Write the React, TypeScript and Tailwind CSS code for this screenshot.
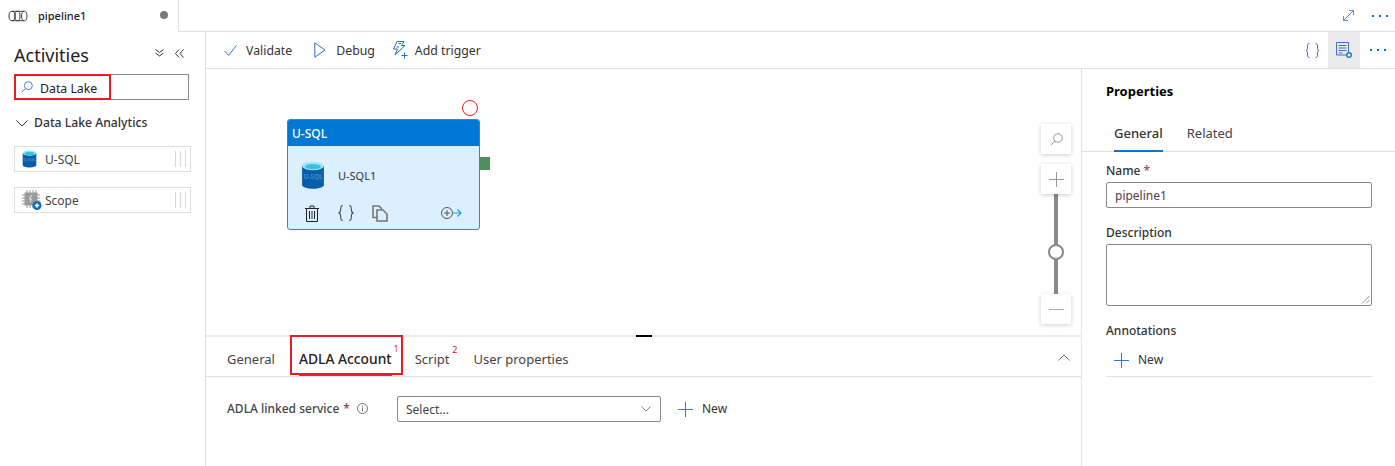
import type { ReactNode } from "react";

function PipelineIcon() {
  return (
    <svg width="20" height="12" viewBox="0 0 20 14" preserveAspectRatio="none" fill="none" stroke="#333" strokeWidth="1">
      <ellipse cx="4" cy="7" rx="3" ry="5.500" />
      <ellipse cx="9.500" cy="7" rx="2.500" ry="5.500" />
      <path d="M4 1.500h12.500c1.500 0 2.500 2.500 2.500 5.500s-1 5.500-2.500 5.500H4" />
      <path d="M16 1.500c-1.500 0-2.500 2.500-2.500 5.500s1 5.500 2.500 5.500" />
    </svg>
  );
}

function DbIcon({ size }: { size: number }) {
  return (
    <svg width={size} height={size * 1.2} viewBox="0 0 24 29">
      <path d="M1 5v19c0 2.500 5 4 11 4s11-1.500 11-4V5z" fill="#0a5ea8" />
      <ellipse cx="12" cy="5" rx="11" ry="4.200" fill="#a5e4f5" />
      <ellipse cx="12" cy="5.600" rx="8" ry="2.600" fill="#36c0e4" />
      <text x="12" y="18.500" textAnchor="middle" fontSize="6.500" fontWeight="700" fill="#3a8cc4" fontFamily="Noto Sans, sans-serif">U-SQL</text>
    </svg>
  );
}

function ScopeIcon() {
  return (
    <svg width="20" height="20" viewBox="0 0 20 20">
      <path d="M0 5h18M0 8h18M0 11h18M0 14h18M5 0v18M8 0v18M11 0v18M14 0v18" stroke="#9a9a9a" strokeWidth="1" />
      <rect x="2.500" y="2.500" width="13" height="13" fill="#9b9b9b" />
      <path d="M9.500 5l-2 4h2l-1 3" stroke="#e8e8e8" strokeWidth="1" fill="none" />
      <circle cx="15" cy="15.500" r="4.500" fill="#0f6cbd" />
      <path d="M12.800 15.500h4.400M15 13.300v4.400" stroke="#fff" strokeWidth="1.400" />
    </svg>
  );
}

function TriggerIcon() {
  return (
    <svg width="16" height="18" viewBox="0 0 16 18" fill="none" stroke="#1f6fc9" strokeWidth="1">
      <path d="M5 .5h7l-2.500 4H13L3 14l2.500-6H1.500z" />
      <path d="M4.500 6h2.500M6.500 2.500h2.500" />
      <path d="M9.500 14.500h6M12.500 11.500v6" />
    </svg>
  );
}

function PropertiesIcon() {
  return (
    <svg width="17" height="17" viewBox="0 0 17 17" fill="none">
      <path d="M.5.500h12v12.500H.5z" stroke="#3f6fd1" />
      <path d="M2.500 3.500h8M2.500 6h8M2.500 8.500h8M2.500 11h4" stroke="#3f6fd1" />
      <circle cx="13" cy="13" r="2.300" stroke="#1c7fb6" strokeWidth="1.500" fill="#ebebeb" />
    </svg>
  );
}

function Glass({ size, color }: { size: number; color: string }) {
  return (
    <svg width={size} height={size} viewBox="0 0 13 13" fill="none" stroke={color} strokeWidth="1">
      <circle cx="8" cy="5" r="4.300" />
      <path d="M5 8L.8 12.200" />
    </svg>
  );
}

function Cross({ size, color }: { size: number; color: string }) {
  return (
    <svg width={size} height={size} viewBox="0 0 15 15" stroke={color} strokeWidth="1" fill="none">
      <path d="M0 7.500h15M7.500 0v15" />
    </svg>
  );
}

function Chevron({ up, width, color }: { up?: boolean; width: number; color: string }) {
  return (
    <svg width={width} height={width / 2 + 1} viewBox="0 0 12 7" fill="none" stroke={color} strokeWidth="1">
      <path d={up ? "M.5 6.500L6 1l5.500 5.500" : "M.5.500L6 6 11.500.500"} />
    </svg>
  );
}

function Braces({ color, height }: { color: string; height: number }) {
  return (
    <svg width={height} height={height} viewBox="0 0 15 15" fill="none" stroke={color} strokeWidth="1">
      <path d="M4.500.5C2.500.5 2.500 2 2.500 4S2.500 7 1 7.500c1.500.5 1.500 1.500 1.500 3.500s0 3.500 2 3.500" />
      <path d="M10.500.5c2 0 2 1.500 2 3.500s0 3 1.500 3.500c-1.500.5-1.500 1.500-1.500 3.500s0 3.500-2 3.500" />
    </svg>
  );
}

function Dots({ className }: { className?: string }) {
  return (
    <span className={`flex gap-[5px] ${className ?? ""}`}>
      <span className="h-[2px] w-[2px] bg-[#0078d4]" />
      <span className="h-[2px] w-[2px] bg-[#0078d4]" />
      <span className="h-[2px] w-[2px] bg-[#0078d4]" />
    </span>
  );
}

function GripLines() {
  return (
    <div className="flex gap-[4px] pr-[4px]">
      <span className="h-[16px] w-px bg-[#d8d8d8]" />
      <span className="h-[16px] w-px bg-[#d8d8d8]" />
      <span className="h-[16px] w-px bg-[#d8d8d8]" />
    </div>
  );
}

function ActivityRow({ icon, label }: { icon: ReactNode; label: string }) {
  return (
    <div className="ml-[14px] flex h-[26px] w-[177px] items-center border border-[#dedede] pl-[7px]">
      <span className="flex w-[22px] shrink-0 items-center">{icon}</span>
      <span className="ml-[1px] flex-1 pt-[2px] text-[12px] text-[#444]">{label}</span>
      <GripLines />
    </div>
  );
}

function ZoomButton({ children, className }: { children: ReactNode; className: string }) {
  return (
    <div className={`absolute left-[835px] flex h-[30px] w-[30px] items-center justify-center bg-white shadow-[0_1px_4px_rgba(0,0,0,0.2)] ${className}`}>
      {children}
    </div>
  );
}

export default function App() {
  return (
    <div
      className="flex h-[466px] w-[1395px] flex-col overflow-hidden bg-white text-[#333]"
      style={{ fontFamily: '"Noto Sans", "Open Sans", sans-serif' }}
    >
      {/* tab strip */}
      <div className="flex h-[32px] shrink-0 items-stretch border-b border-[#e1e1e1]">
        <div className="relative -mb-px flex w-[179px] items-center border-r border-[#e1e1e1] bg-white pl-[8px]">
          <PipelineIcon />
          <span className="ml-[10px] text-[11px] font-medium text-[#222]">pipeline1</span>
          <span className="absolute left-[160px] top-[11px] h-[8px] w-[8px] rounded-full bg-[#7f7a78]" />
        </div>
        <div className="ml-auto flex items-center pr-[7px]">
          <svg width="11" height="11" viewBox="0 0 12 12" fill="none" stroke="#4a82d4" strokeWidth="1">
            <path d="M.5 11.500l11-11M6.500.5h5v5M.5 6.500v5h5" />
          </svg>
          <Dots className="ml-[18px]" />
        </div>
      </div>

      <div className="flex min-h-0 flex-1">
        {/* activities */}
        <aside className="w-[206px] shrink-0 border-r border-[#e1e1e1]">
          <div className="flex h-[42px] items-center pl-[14px] pr-[21px]">
            <h2 className="flex-1 pt-[4px] text-[18px] font-normal text-[#222]">Activities</h2>
            <svg width="9" height="8" viewBox="0 0 9 8" fill="none" stroke="#333" strokeWidth="1" className="mr-[11px]">
              <path d="M.5.5l4 3 4-3M.5 4l4 3 4-3" />
            </svg>
            <svg width="9" height="9" viewBox="0 0 9 9" fill="none" stroke="#333" strokeWidth="1">
              <path d="M4 .5l-3.500 4 3.500 4M8.500 .5l-3.500 4 3.500 4" />
            </svg>
          </div>
          <div className="relative ml-[14px] flex h-[26px] w-[175px] items-center border border-[#8a8886] pl-[6px] text-[12.300px] text-[#222]">
            <Glass size={12} color="#3f6fd1" />
            <span className="ml-[7px] pt-[4px]">Data Lake</span>
            <span className="absolute -left-px -top-px h-[26px] w-[97px] border-2 border-[#ed1c24]" />
          </div>
          <div className="mt-[14px] flex items-center pl-[16px] text-[12.200px] font-medium text-[#333]">
            <Chevron width={12} color="#333" />
            <span className="ml-[6px]">Data Lake Analytics</span>
          </div>
          <div className="mt-[14px] flex flex-col gap-[15px]">
            <ActivityRow icon={<DbIcon size={15} />} label="U-SQL" />
            <ActivityRow icon={<ScopeIcon />} label="Scope" />
          </div>
        </aside>

        <div className="flex min-w-0 flex-1 flex-col">
          {/* toolbar */}
          <div className="flex h-[37px] shrink-0 items-center border-b border-[#e1e1e1] pl-[18px] text-[12.300px] text-[#333]">
            <svg width="13" height="11" viewBox="0 0 13 11" fill="none" stroke="#2f6fc9" strokeWidth="1">
              <path d="M.5 6l4 4.300L12.500.5" />
            </svg>
            <span className="ml-[9px] pt-[2px]">Validate</span>
            <svg width="12" height="16" viewBox="0 0 12 16" fill="none" stroke="#2f6fc9" strokeWidth="1" className="ml-[22px]">
              <path d="M.8.800v14.400L11 8z" />
            </svg>
            <span className="ml-[10px] pt-[2px]">Debug</span>
            <span className="ml-[17px] flex"><TriggerIcon /></span>
            <span className="ml-[7px] pt-[2px]">Add trigger</span>
            <div className="ml-auto flex h-full items-center">
              <Braces color="#2f6fc9" height={15} />
              <div className="ml-[8px] flex h-full w-[32px] items-center justify-center bg-[#ebebeb]">
                <PropertiesIcon />
              </div>
              <Dots className="ml-[10px] mr-[9px]" />
            </div>
          </div>

          <div className="flex min-h-0 flex-1">
            <div className="flex min-w-0 flex-1 flex-col">
              {/* canvas */}
              <div className="relative min-h-0 flex-1">
                <span className="absolute left-[256px] top-[31px] h-[16px] w-[16px] rounded-full border border-[#f01a1a]" />
                <div className="absolute left-[81px] top-[50px] h-[111px] w-[193px] overflow-hidden rounded-[3px] border border-[#3e86ad] bg-[#dcefff]">
                  <div className="flex h-[26px] items-center bg-[#0078d4] pl-[4px] pt-[2px] text-[12px] font-medium text-white">U-SQL</div>
                  <div className="flex items-center pl-[13px] pt-[15px]">
                    <DbIcon size={24} />
                    <span className="ml-[13px] pt-[2px] text-[11px] text-[#333]">U-SQL1</span>
                  </div>
                  <div className="flex items-center pl-[17px] pt-[15px]">
                    <svg width="14" height="17" viewBox="0 0 14 17" fill="none" stroke="#222" strokeWidth="1">
                      <path d="M0 3.500h14M5 3.500V1h4v2.500M1.500 3.500v13h11v-13M4.500 6v8M7 6v8M9.500 6v8" />
                    </svg>
                    <span className="ml-[19px] flex"><Braces color="#444" height={16} /></span>
                    <svg width="16" height="17" viewBox="0 0 16 17" fill="none" stroke="#777" strokeWidth="1.600" className="ml-[18px]">
                      <path d="M5 12.500H1V1h6l3 3" />
                      <path d="M5 5h6l4 4v7H5z" />
                    </svg>
                    <span className="ml-[53px] flex items-center">
                      <svg width="21" height="12" viewBox="0 0 21 12" fill="none">
                        <circle cx="6" cy="6" r="5.500" stroke="#555" />
                        <path d="M3 6h6M6 3v6" stroke="#555" />
                        <path d="M11 6h9M16.500 2.500L20 6l-3.500 3.500" stroke="#1aa0dc" strokeWidth="1.200" />
                      </svg>
                    </span>
                  </div>
                </div>
                <span className="absolute left-[274px] top-[88px] h-[13px] w-[10px] bg-[#4b9358]" />

                <ZoomButton className="top-[55px]">
                  <Glass size={13} color="#999" />
                </ZoomButton>
                <span className="absolute left-[848px] top-[120px] h-[110px] w-[4px] bg-[#8a8a8a]" />
                <ZoomButton className="top-[95px]">
                  <Cross size={15} color="#999" />
                </ZoomButton>
                <span className="absolute left-[842px] top-[175px] h-[16px] w-[16px] rounded-full border-2 border-[#8a8a8a] bg-white" />
                <ZoomButton className="top-[225px]">
                  <span className="h-px w-[15px] bg-[#aaa]" />
                </ZoomButton>
              </div>

              {/* bottom panel */}
              <div className="relative h-[131px] shrink-0 border-t-2 border-[#ececec]">
                <span className="absolute -top-[2px] left-[430px] h-[2px] w-[16px] bg-black" />
                <div className="flex h-[40px] items-stretch border-b border-[#e1e1e1] pl-[21px] text-[13px] text-[#444]">
                  <span className="flex items-center pt-[7px]">General</span>
                  <span className="relative ml-[24px] flex items-center border-b-2 border-[#0078d4] pt-[7px] text-[13.800px] font-medium text-[#222]">
                    ADLA Account
                    <sup className="absolute -right-[7px] top-[12px] text-[9px] font-normal text-[#e3316e]">1</sup>
                    <span className="absolute -left-[9px] -top-[2px] h-[40px] w-[113px] border-2 border-[#ed1c24]" />
                  </span>
                  <span className="relative ml-[23px] flex items-center pt-[7px]">
                    Script
                    <sup className="absolute -right-[8px] top-[13px] text-[9px] text-[#e81123]">2</sup>
                  </span>
                  <span className="ml-[24px] flex items-center pt-[7px]">User properties</span>
                  <span className="ml-auto mr-[11px] mt-[17px]"><Chevron up width={12} color="#666" /></span>
                </div>
                <div className="flex items-center pl-[21px] pt-[19px] text-[12px]">
                  <span className="flex w-[170px] items-center font-medium text-[#444]">
                    ADLA linked service
                    <span className="ml-[4px] text-[#8a3a50]">*</span>
                    <svg width="11" height="11" viewBox="0 0 11 11" fill="none" stroke="#555" strokeWidth="0.800" className="ml-[7px] -translate-y-px">
                      <circle cx="5.500" cy="5.500" r="5" />
                      <path d="M5.500 4.500v4M5.500 2.500v1" />
                    </svg>
                  </span>
                  <div className="flex h-[26px] w-[264px] items-center justify-between rounded-[2px] border border-[#8a8886] pl-[8px] pr-[9px] text-[#444]">
                    <span className="pt-[2px]">Select...</span>
                    <Chevron width={10} color="#666" />
                  </div>
                  <span className="ml-[17px] flex"><Cross size={15} color="#2b7cd3" /></span>
                  <span className="ml-[9px]">New</span>
                </div>
              </div>
            </div>

            {/* properties */}
            <aside className="w-[314px] shrink-0 border-l border-[#e1e1e1]">
              <h3 className="pl-[24px] pt-[13px] text-[13px] font-bold text-black">Properties</h3>
              <div className="mt-[22px] flex h-[28px] border-b border-[#e1e1e1] pl-[32px] text-[13px]">
                <span className="-mb-px border-b-2 border-[#0078d4] font-medium text-[#333]">General</span>
                <span className="ml-[24px] text-[#444]">Related</span>
              </div>
              <div className="px-[24px] pr-[23px] text-[12px]">
                <p className="mt-[10px] font-medium text-[#333]">Name <span className="text-[#a4385a]">*</span></p>
                <div className="mt-[2px] flex h-[26px] items-center rounded-[2px] border border-[#8a8886] pl-[8px] pt-[2px] text-[#5a3a4a]">pipeline1</div>
                <p className="mt-[16px] font-medium text-[#333]">Description</p>
                <div className="relative mt-[2px] h-[62px] rounded-[2px] border border-[#8a8886]">
                  <svg className="absolute bottom-px right-px" width="9" height="9" viewBox="0 0 9 9" stroke="#777" strokeWidth="0.800">
                    <path d="M1 8.500L8.500 1M5 8.500L8.500 5" />
                  </svg>
                </div>
                <p className="mt-[16px] font-medium text-[#333]">Annotations</p>
                <div className="box-border flex h-[37px] items-center border-b border-[#e1e1e1] pl-[8px] pt-[5px]">
                  <Cross size={15} color="#2b7cd3" />
                  <span className="ml-[9px] text-[#333]">New</span>
                </div>
              </div>
            </aside>
          </div>
        </div>
      </div>
    </div>
  );
}
